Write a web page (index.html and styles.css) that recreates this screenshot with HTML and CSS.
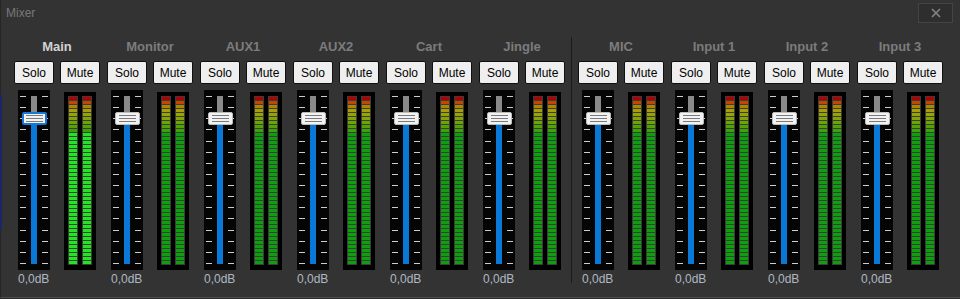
FILE: index.html
```html
<!DOCTYPE html>
<html lang="en">
<head>
  <meta charset="UTF-8">
  <title>Mixer</title>
  <link rel="stylesheet" href="styles.css">
</head>
<body>
  <div class="backdrop-edge"></div>
  <div class="window">
    <div class="titlebar">
      <span class="title">Mixer</span>
      <button type="button" class="close-btn" aria-label="Close">
        <svg class="close-icon" width="10" height="10" viewBox="0 0 10 10"><path d="M1 1 L9 9 M9 1 L1 9" fill="none" stroke="#858585" stroke-width="1.6"/></svg>
      </button>
    </div>
    <div class="mixer">
      <div class="group" id="group-out"></div>
      <div class="divider"></div>
      <div class="group" id="group-in"></div>
    </div>
  </div>
  <script>
    const outputs = ['Main', 'Monitor', 'AUX1', 'AUX2', 'Cart', 'Jingle'];
    const inputs = ['MIC', 'Input 1', 'Input 2', 'Input 3'];

    function buildChannel(name, active) {
      const ch = document.createElement('div');
      ch.className = 'channel' + (active ? ' active' : '');
      let ticks = '';
      for (let i = 0; i < 16; i++) ticks += '<div class="tick-row"><span></span><span></span></div>';
      ch.innerHTML =
        '<div class="ch-name">' + name + '</div>' +
        '<div class="ch-buttons"><button type="button" class="ch-btn">Solo</button><button type="button" class="ch-btn">Mute</button></div>' +
        '<div class="ch-strips">' +
          '<div class="fader">' +
            '<div class="ticks">' + ticks + '</div>' +
            '<div class="track"><div class="track-fill"></div></div>' +
            '<div class="knob"><i></i><i></i><i></i></div>' +
          '</div>' +
          '<div class="meter"><div class="bar"></div><div class="bar"></div></div>' +
        '</div>' +
        '<div class="ch-db">0,0dB</div>';
      return ch;
    }

    const out = document.getElementById('group-out');
    outputs.forEach((n, i) => out.appendChild(buildChannel(n, i === 0)));
    const inp = document.getElementById('group-in');
    inputs.forEach(n => inp.appendChild(buildChannel(n, false)));
  </script>
</body>
</html>
```

FILE: styles.css
```css
html, body { margin: 0; padding: 0; }
body { background: #2a2a2a; font-family: 'Liberation Sans', Arial, sans-serif; width: 960px; height: 299px; overflow: hidden; position: relative; }
.backdrop-edge { position: absolute; left: 0; top: 95px; width: 2px; height: 135px; background: #1c2566; z-index: 2; }
.window { width: 959px; height: 297px; background: #333333; border-left: 1px solid #262626; border-bottom: 1px solid #4d4d4d; display: flex; flex-direction: column; }
.titlebar { height: 26px; display: flex; align-items: flex-start; justify-content: space-between; }
.title { color: #787878; font-size: 12px; line-height: 26px; padding-left: 5px; }
.close-btn { margin: 3px 7px 0 0; width: 35px; height: 20px; background: #2e2e2e; border: 1px solid #444; padding: 0; display: flex; align-items: center; justify-content: center; }
.close-icon { display: block; }

.mixer { display: flex; padding: 13px 0 0 13px; }
.group { display: flex; gap: 7px; }
.divider { width: 1px; background: #1c1c1c; margin: -2px 6px 3px 6px; }

.channel { width: 86px; display: flex; flex-direction: column; }
.ch-name { height: 16px; line-height: 16px; text-align: center; font-size: 13px; font-weight: bold; color: #7c7c7c; }
.channel.active .ch-name { color: #d2d2d2; }
.ch-buttons { margin-top: 6px; display: flex; gap: 6px; height: 23px; }
.ch-btn { width: 40px; height: 23px; padding: 0; background: #efefef; border: 1px solid #101010; border-radius: 2px; font-family: 'Liberation Sans', Arial, sans-serif; font-size: 12px; color: #000; }

.ch-strips { margin-top: 6px; display: flex; align-items: flex-start; gap: 14px; padding-left: 4px; }
.fader { width: 32px; height: 180px; background: #050505; position: relative; }
.ticks { position: absolute; left: 2px; right: 2px; top: 6px; height: 168px; display: flex; flex-direction: column; justify-content: space-between; }
.tick-row { height: 1px; display: flex; justify-content: space-between; }
.tick-row span { width: 6px; height: 1px; background: #cccccc; }
.track { position: absolute; left: 13px; top: 6px; width: 6px; height: 168px; background: #8a8a8a; }
.track-fill { position: absolute; left: 0; right: 0; top: 22px; bottom: 0; background: #0a78d7; }
.knob { position: absolute; left: 4px; top: 22px; width: 23px; height: 11px; background: #f2f2f2; border: 1px solid #bcbcbc; border-radius: 2px; display: flex; flex-direction: column; align-items: center; justify-content: center; gap: 2px; }
.knob i { display: block; width: 17px; height: 1px; background: #7a7a7a; }
.channel.active .knob { border: 2px solid #1479d6; width: 21px; height: 9px; }

.meter { width: 32px; height: 178px; margin-top: 2px; background: #000; display: flex; gap: 4px; padding: 4px 4px 0 4px; box-sizing: border-box; }
.bar { --lit: #0ca00c; width: 10px; height: 169px; box-sizing: border-box; border: 1px solid #3c3c3c; background:
  repeating-linear-gradient(to bottom, transparent 0 3px, #3c3c3c 3px 4px),
  linear-gradient(to bottom, #b40000 0 4px, #c04800 4px 8px, #b08400 8px 12px, #a8a000 12px 16px, #98a400 16px 20px, #84a400 20px 24px, #6ca400 24px 28px, #54a400 28px 32px, #3ca400 32px 36px, var(--lit) 36px); }
.channel.active .bar { --lit: #1ee81e; }

.ch-db { margin-top: 2px; height: 14px; line-height: 14px; padding-left: 4px; font-size: 12px; color: #aeb8c2; }
```
